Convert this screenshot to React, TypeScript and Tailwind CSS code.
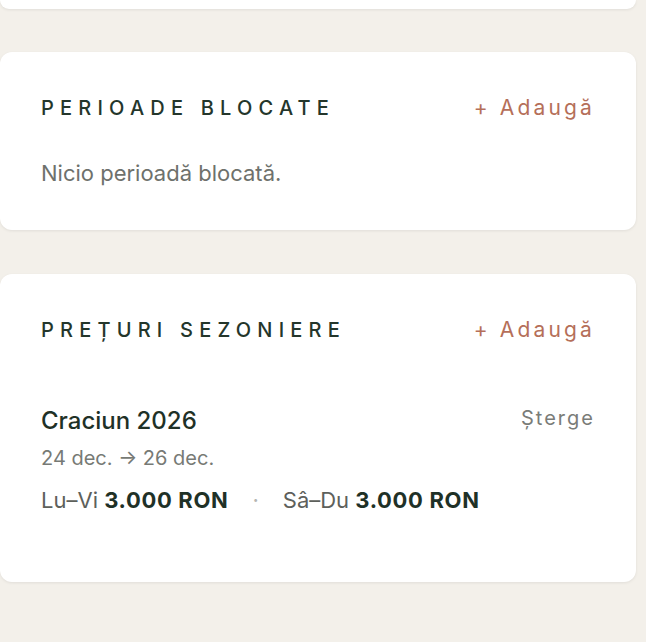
import React from "react";

const Heading = ({ title }: { title: string }) => (
  <div className="flex items-center justify-between">
    <h2 className="text-[20px] leading-[28px] font-medium uppercase tracking-[0.31em] text-[#24362b]">
      {title}
    </h2>
    <button className="text-[21px] leading-[28px] tracking-[0.15em] text-[#b56f59]">
      + Adaugă
    </button>
  </div>
);

const App = () => {
  return (
    <div
      className="min-h-screen bg-[#f3f0ea] pr-[10px] pb-[60px]"
      style={{ fontFamily: "Inter, 'Noto Sans', sans-serif" }}
    >
      <div className="h-[9px] rounded-b-[12px] bg-white shadow-[0_1px_3px_rgba(0,0,0,0.08)]" />

      <section className="mt-[43px] rounded-[12px] bg-white px-[41px] pt-[42px] pb-[42px] shadow-[0_1px_3px_rgba(0,0,0,0.08)]">
        <Heading title="Perioade blocate" />
        <p className="mt-[36px] text-[22px] leading-[30px] text-[#6e716c]">
          Nicio perioadă blocată.
        </p>
      </section>

      <section className="mt-[44px] rounded-[12px] bg-white px-[41px] pt-[42px] pb-[67px] shadow-[0_1px_3px_rgba(0,0,0,0.08)]">
        <Heading title="Prețuri sezoniere" />
        <div className="mt-[61px] flex items-start justify-between">
          <div>
            <div className="text-[24px] leading-[32px] font-medium text-[#1f3127]">
              Craciun 2026
            </div>
            <div className="mt-[7px] text-[20px] leading-[28px] text-[#777a75]">
              24 dec. → 26 dec.
            </div>
            <div className="mt-[13px] flex items-center text-[22px] leading-[30px] text-[#5d605b]">
              <span>
                Lu–Vi{" "}
                <span className="font-bold tracking-[0.03em] text-[#1f3127]">
                  3.000 RON
                </span>
              </span>
              <span className="mx-[24px] text-[#b4b6b2]">·</span>
              <span>
                Sâ–Du{" "}
                <span className="font-bold tracking-[0.03em] text-[#1f3127]">
                  3.000 RON
                </span>
              </span>
            </div>
          </div>
          <button className="-mt-[1px] text-[20px] leading-[28px] tracking-[0.1em] text-[#7a7c78]">
            Șterge
          </button>
        </div>
      </section>
    </div>
  );
};

export default App;
